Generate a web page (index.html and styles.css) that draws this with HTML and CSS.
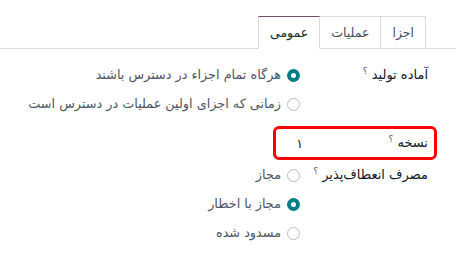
FILE: index.html
```html
<!DOCTYPE html>
<html lang="fa" dir="rtl">
<head>
  <meta charset="UTF-8" />
  <title>عمومی</title>
  <link rel="stylesheet" href="styles.css">
</head>
<body>
  <div class="tabs">
    <a class="tab" href="#">اجزا</a>
    <a class="tab" href="#">عملیات</a>
    <a class="tab active" href="#">عمومی</a>
  </div>

  <div class="form">
    <div class="row">
      <label class="label">آماده تولید <sup>؟</sup></label>
      <div class="options">
        <div class="option"><span class="radio checked"></span>هرگاه تمام اجزاء در دسترس باشند</div>
        <div class="option"><span class="radio"></span>زمانی که اجزای اولین عملیات در دسترس است</div>
      </div>
    </div>

    <div class="row highlight">
      <label class="label">نسخه <sup>؟</sup></label>
      <div class="value">۱</div>
    </div>

    <div class="row">
      <label class="label">مصرف انعطاف‌پذیر <sup>؟</sup></label>
      <div class="options">
        <div class="option"><span class="radio"></span>مجاز</div>
        <div class="option"><span class="radio checked"></span>مجاز با اخطار</div>
        <div class="option"><span class="radio"></span>مسدود شده</div>
      </div>
    </div>
  </div>
</body>
</html>
```

FILE: styles.css
```css
* {
  box-sizing: border-box;
}

body {
  margin: 0;
  background: #fff;
  font-family: "DejaVu Sans", sans-serif;
  font-size: 12.8px;
  color: #374151;
}

.tabs {
  display: flex;
  margin-top: 16px;
  padding-right: 30px;
  border-bottom: 1px solid #d8dadd;
  height: 33px;
}

.tab {
  display: flex;
  align-items: center;
  height: 33px;
  padding: 0 11px;
  border: 1px solid #d8dadd;
  border-left: none;
  color: #495057;
  font-size: 12.5px;
  text-decoration: none;
  background: #fff;
}

.tab.active {
  border-top: 1px solid #714b67;
  border-left: 1px solid #d8dadd;
  border-bottom: 1px solid #fff;
  color: #212529;
}

.form {
  padding: 15px 28px 0 0;
}

.row {
  display: flex;
  align-items: flex-start;
}

.label {
  width: 128px;
  flex-shrink: 0;
  color: #111827;
  font-size: 13px;
  line-height: 22px;
}

.label sup {
  font-size: 9px;
  line-height: 0;
  color: #555;
}

.options {
  display: flex;
  flex-direction: column;
  gap: 7px;
}

.option {
  display: flex;
  align-items: center;
  gap: 6px;
  line-height: 22px;
  color: #4b5563;
}

.radio {
  width: 13px;
  height: 13px;
  border-radius: 50%;
  border: 1px solid #b8bcc2;
  background: #fff;
}

.radio.checked {
  border: 4px solid #017e84;
}

.highlight {
  align-items: center;
  margin: 11px -9px 0 0;
  width: 164px;
  height: 34px;
  padding-right: 6px;
  border: 3px solid #f00;
  border-radius: 6px;
}

.highlight .label {
  width: 125px;
}

.value {
  color: #212529;
}

.row + .row:last-child {
  margin-top: 4px;
}
```
